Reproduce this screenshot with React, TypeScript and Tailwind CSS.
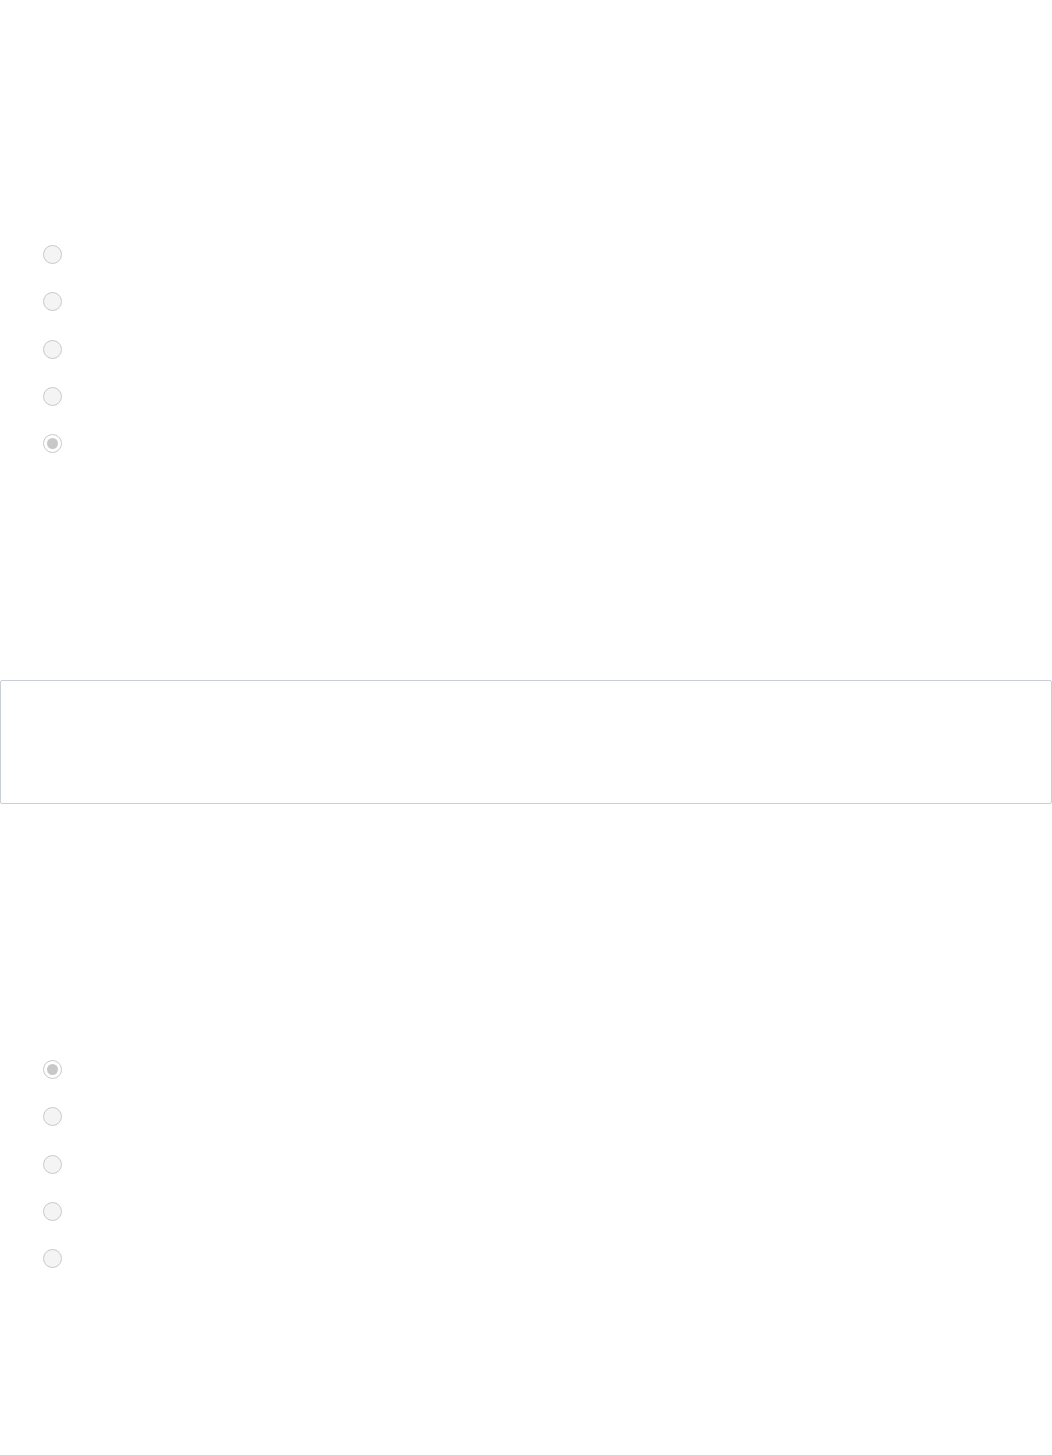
import React from 'react';

type RadioProps = { checked?: boolean };

const Radio: React.FC<RadioProps> = ({ checked }) => (
  <div
    className={`w-[19px] h-[19px] rounded-full border-[1.75px] border-[#c9c9c9] flex items-center justify-center ${
      checked ? 'bg-white' : 'bg-[#f4f4f4]'
    }`}
  >
    {checked && <div className="w-[11px] h-[11px] rounded-full bg-[#c8c8c8]" />}
  </div>
);

const RadioGroup: React.FC<{ selected: number }> = ({ selected }) => (
  <div className="flex flex-col gap-[28.25px] pl-[43px]">
    {[0, 1, 2, 3, 4].map(i => (
      <label key={i} className="flex items-center gap-2">
        <Radio checked={i === selected} />
      </label>
    ))}
  </div>
);

export default function App() {
  return (
    <div className="min-h-[1455px] bg-white font-['Liberation_Sans',sans-serif] pt-[245px]">
      {/* First question */}
      <RadioGroup selected={4} />

      {/* Text area */}
      <div className="mt-[227px] h-[124px] w-full border border-[#c9ced8] rounded-[2px] bg-white" />

      {/* Second question */}
      <div className="mt-[256px]">
        <RadioGroup selected={0} />
      </div>
    </div>
  );
}
